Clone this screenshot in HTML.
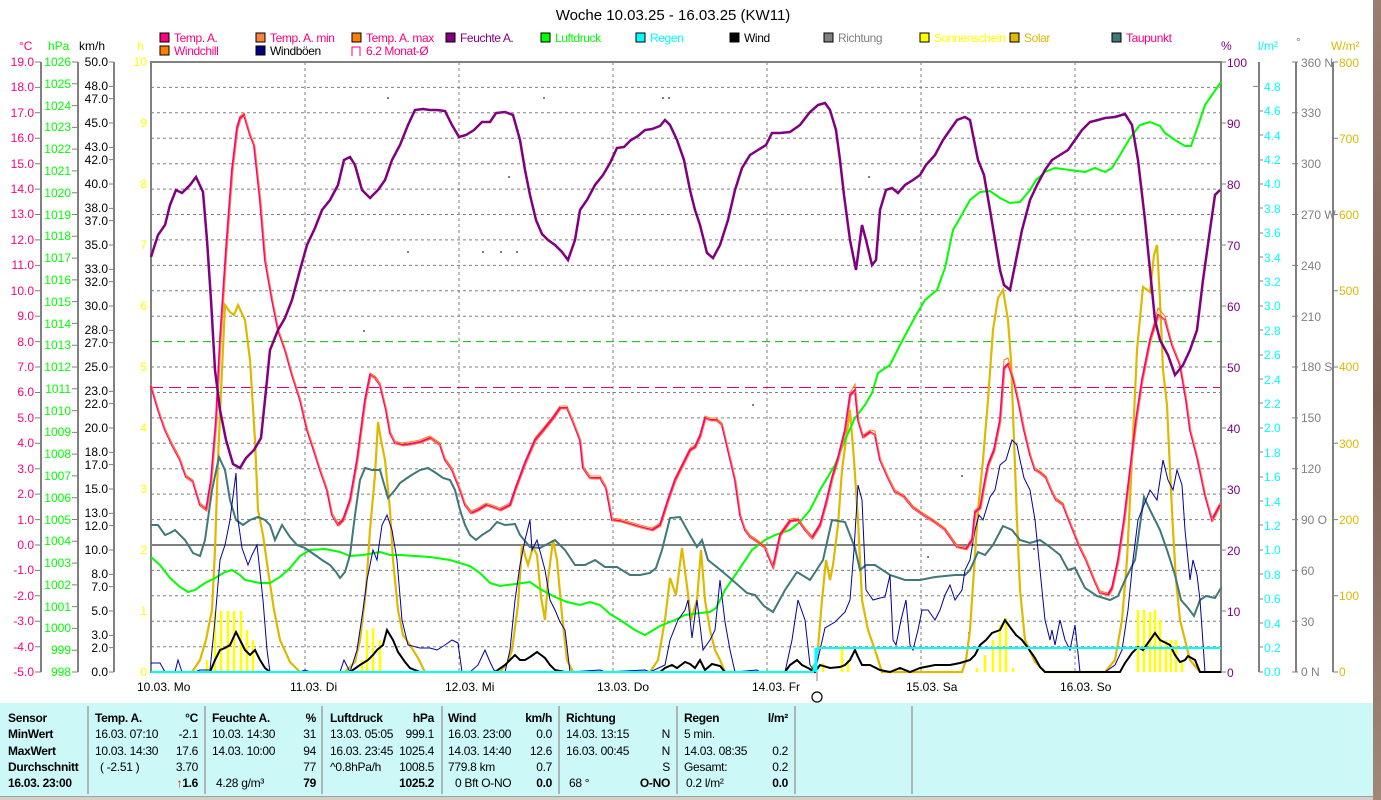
<!DOCTYPE html>
<html><head><meta charset="utf-8"><style>
html,body{margin:0;padding:0;background:#fff;width:1381px;height:800px;overflow:hidden}
svg{display:block;font-family:"Liberation Sans",Arial,sans-serif}
.t{font-size:12px}
.lg text{letter-spacing:-0.4px}
.tb text{letter-spacing:-0.3px}
</style></head><body>
<svg width="1381" height="800" viewBox="0 0 1381 800" xmlns="http://www.w3.org/2000/svg">
<rect x="0" y="0" width="1381" height="800" fill="#fff"/>
<defs><linearGradient id="ph" x1="0" y1="0" x2="0" y2="1"><stop offset="0" stop-color="#9a7e70"/><stop offset=".5" stop-color="#7a5e52"/><stop offset="1" stop-color="#a08878"/></linearGradient></defs>
<rect x="1373" y="0" width="8" height="800" fill="url(#ph)"/>

<text x="673" y="20" font-size="15" text-anchor="middle" fill="#000">Woche 10.03.25 - 16.03.25 (KW11)</text>

<g class="t lg" font-size="11">
<rect x="160" y="33" width="9" height="9" fill="#ff0080" stroke="#000"/><text x="174" y="42" fill="#ff0080">Temp. A.</text>
<rect x="256" y="33" width="9" height="9" fill="#ff8040" stroke="#000"/><text x="270" y="42" fill="#ff0080">Temp. A. min</text>
<rect x="352" y="33" width="9" height="9" fill="#ff8000" stroke="#000"/><text x="366" y="42" fill="#ff0080">Temp. A. max</text>
<rect x="446" y="33" width="9" height="9" fill="#800080" stroke="#000"/><text x="460" y="42" fill="#800080">Feuchte A.</text>
<rect x="541" y="33" width="9" height="9" fill="#00ff00" stroke="#000"/><text x="555" y="42" fill="#00ff00">Luftdruck</text>
<rect x="636" y="33" width="9" height="9" fill="#00ffff" stroke="#000"/><text x="650" y="42" fill="#00ffff">Regen</text>
<rect x="730" y="33" width="9" height="9" fill="#000" stroke="#000"/><text x="744" y="42" fill="#000">Wind</text>
<rect x="824" y="33" width="9" height="9" fill="#808080" stroke="#000"/><text x="838" y="42" fill="#808080">Richtung</text>
<rect x="920" y="33" width="9" height="9" fill="#ffff00" stroke="#000"/><text x="934" y="42" fill="#ffff00">Sonnenschein</text>
<rect x="1010" y="33" width="9" height="9" fill="#e0b800" stroke="#000"/><text x="1024" y="42" fill="#e0b800">Solar</text>
<rect x="1112" y="33" width="9" height="9" fill="#407878" stroke="#000"/><text x="1126" y="42" fill="#ff0080">Taupunkt</text>
<rect x="160" y="46" width="9" height="9" fill="#ff8000" stroke="#000"/><text x="174" y="55" fill="#ff0080">Windchill</text>
<rect x="256" y="46" width="9" height="9" fill="#000080" stroke="#000"/><text x="270" y="55" fill="#000">Windböen</text>
<path d="M352 56 V47 H360 V56" fill="none" stroke="#ff0080"/><text x="366" y="55" fill="#ff0080">6.2 Monat-Ø</text>
</g>

<g class="t" font-size="11">
<text x="19" y="50" fill="#ff0080">°C</text>
<text x="48" y="50" fill="#00ff00">hPa</text>
<text x="79" y="50" fill="#000">km/h</text>
<text x="137" y="50" fill="#ffff00">h</text>
<text x="1221" y="50" fill="#800080">%</text>
<text x="1258" y="50" fill="#00ffff">l/m²</text>
<text x="1296" y="46" fill="#808080">°</text>
<text x="1331" y="50" fill="#e0b800">W/m²</text>
</g>

<g stroke="#808080" stroke-width="1" stroke-dasharray="3,3">
<path d="M151 87.4H1221M151 112.8H1221M151 138.3H1221M151 163.7H1221M151 189.1H1221M151 214.5H1221M151 239.9H1221M151 265.4H1221M151 290.8H1221M151 316.2H1221M151 367H1221M151 392.5H1221M151 417.9H1221M151 443.3H1221M151 468.7H1221M151 494.1H1221M151 519.6H1221M151 570.4H1221M151 595.8H1221M151 621.2H1221M151 646.7H1221"/>
<path d="M305 62V672M459 62V672M613 62V672M767 62V672M921 62V672M1075 62V672"/>
</g>
<path d="M151 341.6H1221" stroke="#00c000" stroke-dasharray="8,5"/>
<path d="M151 387.5H1221" stroke="#e0007a" stroke-dasharray="12,6"/>
<path d="M151 545H1221" stroke="#808080" stroke-width="2"/>

<g stroke="#808080" stroke-width="2" fill="none">
<path d="M41 62V672M78 62V672M114 62V672"/>
<path d="M151 61V673M1221 61V673M150 62H1222"/>
<path d="M1259 62V672M1296 62V672M1333 62V672"/>
</g>
<g stroke="#808080" stroke-width="1">
<path d="M35 62h6M35 87.4h6M35 112.8h6M35 138.3h6M35 163.7h6M35 189.1h6M35 214.5h6M35 239.9h6M35 265.4h6M35 290.8h6M35 316.2h6M35 341.6h6M35 367h6M35 392.5h6M35 417.9h6M35 443.3h6M35 468.7h6M35 494.1h6M35 519.6h6M35 545h6M35 570.4h6M35 595.8h6M35 621.2h6M35 646.7h6M35 672h6"/>
<path d="M72 62h6M72 83.8h6M72 105.6h6M72 127.4h6M72 149.1h6M72 170.9h6M72 192.7h6M72 214.5h6M72 236.3h6M72 258.1h6M72 279.9h6M72 301.6h6M72 323.4h6M72 345.2h6M72 367h6M72 388.8h6M72 410.6h6M72 432.4h6M72 454.1h6M72 475.9h6M72 497.7h6M72 519.5h6M72 541.3h6M72 563.1h6M72 584.9h6M72 606.6h6M72 628.4h6M72 650.2h6M72 672h6"/>
<path d="M109 62h5M109 86.4h5M109 98.6h5M109 123h5M109 147.4h5M109 159.6h5M109 184h5M109 208.4h5M109 220.6h5M109 245h5M109 269.4h5M109 281.6h5M109 306h5M109 330.4h5M109 342.6h5M109 367h5M109 391.4h5M109 403.6h5M109 428h5M109 452.4h5M109 464.6h5M109 489h5M109 513.4h5M109 525.6h5M109 550h5M109 574.4h5M109 586.6h5M109 611h5M109 635.4h5M109 647.6h5M109 672h5"/>
<path d="M1221 62h5M1221 123h5M1221 184h5M1221 245h5M1221 306h5M1221 367h5M1221 428h5M1221 489h5M1221 550h5M1221 611h5M1221 672h5"/>
<path d="M1253 86.4h6M1259 111h4M1259 135h4M1259 160h4M1259 184h4M1259 208h4M1259 233h4M1259 257h4M1259 281h4M1259 306h4M1259 330h4M1259 355h4M1259 379h4M1259 403h4M1259 428h4M1259 452h4M1259 477h4M1259 501h4M1259 525h4M1259 550h4M1259 574h4M1259 599h4M1259 623h4M1259 647h4M1259 672h4"/>
<path d="M1292 62h6M1292 112.8h6M1292 163.7h6M1292 214.5h6M1292 265.4h6M1292 316.2h6M1292 367h6M1292 417.9h6M1292 468.7h6M1292 519.6h6M1292 570.4h6M1292 621.2h6M1292 672h6"/>
<path d="M1333 62h5M1333 138.3h5M1333 214.5h5M1333 290.8h5M1333 367h5M1333 443.3h5M1333 519.6h5M1333 595.8h5M1333 672h5"/>
<path d="M817 672v9"/>
</g>

<g class="t" font-size="12" text-anchor="end" fill="#ff0080">
<text x="34" y="66">19.0</text><text x="34" y="91">18.0</text><text x="34" y="117">17.0</text><text x="34" y="142">16.0</text><text x="34" y="168">15.0</text><text x="34" y="193">14.0</text><text x="34" y="218">13.0</text><text x="34" y="244">12.0</text><text x="34" y="269">11.0</text><text x="34" y="295">10.0</text><text x="34" y="320">9.0</text><text x="34" y="346">8.0</text><text x="34" y="371">7.0</text><text x="34" y="396">6.0</text><text x="34" y="422">5.0</text><text x="34" y="447">4.0</text><text x="34" y="473">3.0</text><text x="34" y="498">2.0</text><text x="34" y="524">1.0</text><text x="34" y="549">0.0</text><text x="34" y="574">-1.0</text><text x="34" y="600">-2.0</text><text x="34" y="625">-3.0</text><text x="34" y="651">-4.0</text><text x="34" y="676">-5.0</text>
</g>
<g class="t" font-size="12" text-anchor="end" fill="#00ff00">
<text x="71" y="66">1026</text><text x="71" y="88">1025</text><text x="71" y="110">1024</text><text x="71" y="131">1023</text><text x="71" y="153">1022</text><text x="71" y="175">1021</text><text x="71" y="197">1020</text><text x="71" y="219">1019</text><text x="71" y="240">1018</text><text x="71" y="262">1017</text><text x="71" y="284">1016</text><text x="71" y="306">1015</text><text x="71" y="328">1014</text><text x="71" y="349">1013</text><text x="71" y="371">1012</text><text x="71" y="393">1011</text><text x="71" y="415">1010</text><text x="71" y="436">1009</text><text x="71" y="458">1008</text><text x="71" y="480">1007</text><text x="71" y="502">1006</text><text x="71" y="524">1005</text><text x="71" y="545">1004</text><text x="71" y="567">1003</text><text x="71" y="589">1002</text><text x="71" y="611">1001</text><text x="71" y="632">1000</text><text x="71" y="654">999</text><text x="71" y="676">998</text>
</g>
<g class="t" font-size="12" text-anchor="end" fill="#000">
<text x="108" y="66">50.0</text><text x="108" y="90">48.0</text><text x="108" y="103">47.0</text><text x="108" y="127">45.0</text><text x="108" y="151">43.0</text><text x="108" y="164">42.0</text><text x="108" y="188">40.0</text><text x="108" y="212">38.0</text><text x="108" y="225">37.0</text><text x="108" y="249">35.0</text><text x="108" y="273">33.0</text><text x="108" y="286">32.0</text><text x="108" y="310">30.0</text><text x="108" y="334">28.0</text><text x="108" y="347">27.0</text><text x="108" y="371">25.0</text><text x="108" y="395">23.0</text><text x="108" y="408">22.0</text><text x="108" y="432">20.0</text><text x="108" y="456">18.0</text><text x="108" y="469">17.0</text><text x="108" y="493">15.0</text><text x="108" y="517">13.0</text><text x="108" y="530">12.0</text><text x="108" y="554">10.0</text><text x="108" y="578">8.0</text><text x="108" y="591">7.0</text><text x="108" y="615">5.0</text><text x="108" y="639">3.0</text><text x="108" y="652">2.0</text><text x="108" y="676">0.0</text>
</g>
<g class="t" font-size="12" text-anchor="end" fill="#ffff00">
<text x="147" y="66">10</text><text x="147" y="127">9</text><text x="147" y="188">8</text><text x="147" y="249">7</text><text x="147" y="310">6</text><text x="147" y="371">5</text><text x="147" y="432">4</text><text x="147" y="493">3</text><text x="147" y="554">2</text><text x="147" y="615">1</text><text x="147" y="676">0</text>
</g>
<g class="t" font-size="12" fill="#800080">
<text x="1227" y="67">100</text><text x="1227" y="128">90</text><text x="1227" y="189">80</text><text x="1227" y="250">70</text><text x="1227" y="311">60</text><text x="1227" y="372">50</text><text x="1227" y="433">40</text><text x="1227" y="494">30</text><text x="1227" y="555">20</text><text x="1227" y="616">10</text><text x="1227" y="677">0</text>
</g>
<g class="t" font-size="12" fill="#00ffff">
<text x="1264" y="91">4.8</text><text x="1264" y="115">4.6</text><text x="1264" y="140">4.4</text><text x="1264" y="164">4.2</text><text x="1264" y="188">4.0</text><text x="1264" y="213">3.8</text><text x="1264" y="237">3.6</text><text x="1264" y="262">3.4</text><text x="1264" y="286">3.2</text><text x="1264" y="310">3.0</text><text x="1264" y="335">2.8</text><text x="1264" y="359">2.6</text><text x="1264" y="384">2.4</text><text x="1264" y="408">2.2</text><text x="1264" y="432">2.0</text><text x="1264" y="457">1.8</text><text x="1264" y="481">1.6</text><text x="1264" y="506">1.4</text><text x="1264" y="530">1.2</text><text x="1264" y="554">1.0</text><text x="1264" y="579">0.8</text><text x="1264" y="603">0.6</text><text x="1264" y="628">0.4</text><text x="1264" y="652">0.2</text><text x="1264" y="676">0.0</text>
</g>
<g class="t" font-size="12" fill="#808080">
<text x="1301" y="67">360 N</text><text x="1301" y="117">330</text><text x="1301" y="168">300</text><text x="1301" y="219">270 W</text><text x="1301" y="270">240</text><text x="1301" y="321">210</text><text x="1301" y="371">180 S</text><text x="1301" y="422">150</text><text x="1301" y="473">120</text><text x="1301" y="524">90  O</text><text x="1301" y="575">60</text><text x="1301" y="626">30</text><text x="1301" y="676">0  N</text>
</g>
<g class="t" font-size="12" fill="#e0b800">
<text x="1339" y="67">800</text><text x="1339" y="143">700</text><text x="1339" y="219">600</text><text x="1339" y="295">500</text><text x="1339" y="371">400</text><text x="1339" y="448">300</text><text x="1339" y="524">200</text><text x="1339" y="600">100</text><text x="1339" y="676">0</text>
</g>

<g class="t" font-size="12" fill="#000">
<text x="137" y="691">10.03.  Mo</text><text x="290" y="691">11.03.  Di</text><text x="445" y="691">12.03.  Mi</text><text x="597" y="691">13.03.  Do</text><text x="752" y="691">14.03.  Fr</text><text x="906" y="691">15.03.  Sa</text><text x="1060" y="691">16.03.  So</text>
</g>
<circle cx="817" cy="697" r="5" fill="none" stroke="#000" stroke-width="1.2"/>

<g fill="#808080">
<rect x="387" y="97" width="2" height="2"/><rect x="543" y="97" width="2" height="2"/><rect x="662" y="97" width="2" height="2"/><rect x="668" y="97" width="2" height="2"/><rect x="407" y="251" width="2" height="2"/><rect x="482" y="251" width="2" height="2"/><rect x="500" y="251" width="2" height="2"/><rect x="516" y="251" width="2" height="2"/><rect x="363" y="330" width="2" height="2"/><rect x="752" y="404" width="2" height="2"/><rect x="868" y="176" width="2" height="2"/><rect x="508" y="176" width="2" height="2"/><rect x="961" y="475" width="2" height="2"/><rect x="927" y="556" width="2" height="2"/><rect x="1033" y="548" width="2" height="2"/><rect x="968" y="632" width="2" height="2"/>
</g>

<g stroke="#ffff00" stroke-width="2.5">
<path d="M215 672V611M221 672V611M228 672V611M234 672V611M241 672V611M247 672V630M253 672V640M207 672V660"/>
<path d="M367 672V630M373 672V628M380 672V640M362 672V660"/>
<path d="M823 672V663M842 672V645M848 672V660"/>
<path d="M977 672V668M985 672V655M993 672V640M1000 672V625M1006 672V618M1013 672V668"/>
<path d="M1138 672V610M1144 672V610M1150 672V612M1155 672V610M1160 672V620M1166 672V640M1171 672V640M1176 672V640M1182 672V660"/>
</g>

<polyline fill="none" stroke="#e0b800" stroke-width="2.2" points="151,672 192,672 200,660 206,640 212,610 215,550 218,460 222,370 225,305 230,312 234,315 238,305 245,320 250,360 255,440 258,510 263,535 268,570 274,610 280,640 290,662 300,672 345,672 355,662 360,640 366,590 370,530 375,475 378,422 381,440 385,460 390,510 393,560 398,610 403,635 410,645 418,658 425,672 500,672 508,662 512,650 518,605 522,545 528,565 533,547 537,555 541,597 545,620 548,580 553,540 557,560 562,615 567,660 573,672 650,672 658,660 665,620 670,578 676,595 682,548 688,594 691,620 697,600 701,550 705,600 710,630 715,650 720,660 725,672 810,672 817,660 822,600 826,560 830,580 833,565 838,525 842,470 846,440 850,410 854,460 858,520 862,600 868,630 875,650 882,672 962,672 966,660 970,630 974,570 978,510 983,460 988,400 993,330 998,298 1003,290 1008,320 1011,360 1014,440 1017,520 1020,590 1025,640 1035,662 1045,672 1105,672 1115,660 1122,620 1127,560 1131,480 1137,350 1143,287 1150,292 1154,255 1157,245 1160,300 1163,370 1167,405 1170,470 1173,530 1176,580 1180,620 1190,660 1200,672"/>

<polyline fill="none" stroke="#00ff00" stroke-width="2" points="151,557 160,565 170,578 180,587 188,592 195,590 205,583 215,578 225,572 232,570 240,575 245,580 260,583 270,583 280,577 290,568 300,556 310,550 325,549 340,552 350,556 363,555 380,552 390,555 400,555 430,557 450,560 470,566 480,573 490,583 500,586 515,584 530,582 540,589 555,597 567,602 580,605 590,602 600,605 610,614 620,620 635,630 645,635 660,626 675,620 685,615 700,613 710,612 716,608 725,590 740,568 752,550 765,540 775,535 790,530 800,522 810,510 820,490 835,465 845,440 855,418 865,405 872,393 878,373 890,365 900,345 915,317 925,300 937,290 945,268 953,230 960,218 970,200 980,192 990,191 1000,198 1010,203 1020,202 1030,190 1036,180 1045,172 1055,168 1070,170 1085,172 1095,168 1105,172 1112,168 1120,155 1130,138 1140,125 1150,122 1160,126 1165,133 1175,140 1185,146 1191,146 1200,120 1205,105 1212,95 1221,82"/>

<polyline fill="none" stroke="#407878" stroke-width="2" points="151,525 158,525 165,535 170,533 175,530 185,540 193,553 200,556 205,540 212,490 219,457 225,470 230,500 236,520 243,525 250,520 258,517 265,520 270,525 275,540 282,525 290,537 297,545 305,548 315,555 322,560 330,565 336,572 340,578 345,572 350,555 355,515 360,480 365,468 372,470 380,470 388,498 395,490 400,483 410,476 420,470 428,468 436,473 443,478 450,480 455,490 460,510 465,525 470,535 476,540 482,535 490,530 497,522 505,525 515,524 520,535 530,547 540,548 555,540 565,550 575,565 585,565 595,560 605,567 617,567 630,575 640,575 650,573 656,568 662,550 670,518 680,517 690,535 697,547 702,540 708,560 718,568 730,578 747,593 755,595 764,606 773,612 785,590 797,572 810,580 823,560 832,520 845,522 855,548 860,570 866,565 875,565 890,575 905,580 920,580 935,577 955,575 965,575 970,570 978,552 985,555 993,545 1003,526 1012,530 1020,540 1030,543 1040,540 1050,547 1060,555 1068,570 1075,568 1085,588 1097,596 1110,600 1118,596 1125,580 1135,560 1140,525 1144,497 1150,510 1160,530 1167,550 1175,575 1181,600 1188,608 1194,616 1200,600 1206,596 1215,598 1221,588"/>

<polyline fill="none" stroke="#0000a0" stroke-width="1" points="151,663 160,663 165,672 175,672 178,660 182,672 195,672 200,670 210,670 215,620 220,560 225,545 230,520 236,473 238,520 242,548 248,565 252,555 257,545 263,600 267,650 270,672 300,672 305,670 310,672 340,672 344,660 350,672 357,650 363,610 367,580 373,550 377,560 382,525 387,515 392,530 397,560 402,620 408,645 420,648 430,648 437,650 445,645 452,640 458,643 462,672 470,672 478,665 485,650 490,662 495,672 505,672 510,650 515,600 520,565 525,540 530,520 532,550 537,540 545,570 550,600 555,610 560,622 565,630 570,672 600,670 605,672 645,670 650,672 665,665 670,640 678,620 685,610 688,600 692,638 697,600 703,650 710,640 715,630 720,580 725,622 730,650 735,672 757,670 760,672 785,672 792,640 798,600 805,620 810,665 815,672 820,650 825,628 835,622 845,612 850,600 854,550 858,485 862,500 866,590 873,600 880,598 885,597 890,575 893,640 896,645 901,620 906,600 910,645 913,650 918,630 922,610 928,610 935,620 940,610 945,595 950,585 955,600 962,590 965,570 970,560 975,530 979,515 983,520 990,497 995,490 1000,465 1006,460 1012,440 1017,445 1020,460 1024,478 1030,490 1035,520 1040,570 1045,620 1050,640 1052,630 1055,645 1060,620 1065,640 1070,650 1075,625 1080,672 1105,672 1115,665 1122,650 1128,610 1133,560 1138,520 1144,505 1150,490 1157,500 1163,460 1168,480 1173,490 1177,470 1182,485 1185,530 1190,580 1193,560 1197,575 1200,600 1205,672 1221,672"/>

<polyline fill="none" stroke="#000" stroke-width="2" points="151,672 210,672 215,660 220,650 225,648 230,645 236,632 240,640 245,650 250,655 255,650 260,660 265,668 270,672 350,672 360,665 368,660 373,655 377,650 383,645 387,630 393,640 398,652 405,662 410,668 420,672 495,672 505,665 515,655 520,660 525,660 530,657 537,652 545,658 550,665 555,670 565,672 660,672 665,668 672,665 677,668 685,662 690,664 695,668 700,660 705,670 712,664 720,666 725,672 785,672 790,665 797,660 802,665 808,668 815,672 820,665 830,668 840,667 845,665 850,660 855,650 858,657 862,665 870,665 880,670 890,672 900,668 910,672 920,668 935,665 950,665 960,663 970,660 975,655 980,645 986,640 992,633 1000,630 1005,620 1010,627 1016,635 1022,640 1028,648 1035,658 1040,667 1045,672 1120,672 1125,663 1132,653 1138,647 1143,650 1150,640 1155,633 1160,640 1170,645 1175,655 1180,662 1185,660 1188,656 1195,660 1200,672 1221,672"/>

<polyline fill="none" stroke="#00ffff" stroke-width="2" points="151,672 813,672 816,660 818,648 1221,648"/>
<path d="M816 672V648" stroke="#00ffff" stroke-width="3"/>

<polyline fill="none" stroke="#ff8000" stroke-width="1" transform="translate(0,-2)" points="151,386 158,410 165,430 172,445 180,460 186,477 193,482 200,505 206,510 211,480 216,420 220,340 226,250 232,170 237,128 240,118 244,115 250,135 254,145 260,200 265,260 272,300 278,330 285,350 292,375 300,400 307,430 313,448 320,470 327,490 332,515 338,525 343,520 350,500 357,460 365,400 370,375 375,378 380,385 386,410 390,433 395,443 402,445 410,444 420,442 430,438 440,445 445,460 452,470 460,490 465,505 471,513 478,510 486,505 492,507 500,510 510,505 515,490 525,463 535,440 545,428 553,418 560,408 567,408 573,422 580,440 583,468 590,478 600,478 606,488 612,520 620,521 630,524 640,527 652,530 660,525 668,500 675,480 685,460 690,450 695,447 700,436 705,418 710,420 716,420 722,425 727,446 735,480 740,515 745,530 750,537 756,541 765,548 773,567 780,535 790,521 798,520 805,530 812,538 820,525 826,503 832,478 838,458 845,430 850,395 855,386 858,420 863,437 870,432 875,433 880,460 888,478 895,492 904,497 913,508 923,515 934,522 945,530 950,537 957,547 966,549 972,540 975,512 980,508 985,480 988,465 994,450 1000,420 1004,362 1008,360 1013,378 1018,400 1024,430 1030,455 1035,470 1040,473 1046,478 1052,492 1056,500 1063,505 1068,518 1076,538 1080,548 1086,560 1095,582 1100,593 1108,595 1112,588 1118,560 1124,520 1130,470 1136,420 1142,380 1150,340 1158,310 1165,318 1172,345 1180,365 1186,400 1190,430 1197,457 1205,495 1212,520 1220,505"/>
<polyline fill="none" stroke="#ff0080" stroke-width="2" points="151,386 158,410 165,430 172,445 180,460 186,477 193,482 200,505 206,510 211,480 216,420 220,340 226,250 232,170 237,128 240,118 244,115 250,135 254,145 260,200 265,260 272,300 278,330 285,350 292,375 300,400 307,430 313,448 320,470 327,490 332,515 338,525 343,520 350,500 357,460 365,400 370,375 375,378 380,385 386,410 390,433 395,443 402,445 410,444 420,442 430,438 440,445 445,460 452,470 460,490 465,505 471,513 478,510 486,505 492,507 500,510 510,505 515,490 525,463 535,440 545,428 553,418 560,408 567,408 573,422 580,440 583,468 590,478 600,478 606,488 612,520 620,521 630,524 640,527 652,530 660,525 668,500 675,480 685,460 690,450 695,447 700,436 705,418 710,420 716,420 722,425 727,446 735,480 740,515 745,530 750,537 756,541 765,548 773,567 780,535 790,521 798,520 805,530 812,538 820,525 826,503 832,478 838,458 845,430 850,395 855,390 858,420 863,437 870,432 875,435 880,460 888,478 895,492 904,497 913,508 923,515 934,522 945,530 950,537 957,547 966,549 972,540 975,512 980,508 985,480 988,465 994,450 1000,420 1004,368 1008,364 1013,378 1018,400 1024,430 1030,455 1035,470 1040,473 1046,478 1052,492 1056,500 1063,505 1068,518 1076,538 1080,548 1086,560 1095,582 1100,593 1108,595 1112,588 1118,560 1124,520 1130,470 1136,420 1142,380 1150,340 1158,315 1165,320 1172,345 1180,365 1186,400 1190,430 1197,457 1205,495 1212,520 1220,505"/>
<polyline fill="none" stroke="#ff8040" stroke-width="1" transform="translate(1,1)" points="151,386 158,410 165,430 172,445 180,460 186,477 193,482 200,505 206,510 211,480 216,420 220,340 226,250 232,170 237,128 240,118 244,115 250,135 254,145 260,200 265,260 272,300 278,330 285,350 292,375 300,400 307,430 313,448 320,470 327,490 332,515 338,525 343,520 350,500 357,460 365,400 370,375 375,378 380,385 386,410 390,433 395,443 402,445 410,444 420,442 430,438 440,445 445,460 452,470 460,490 465,505 471,513 478,510 486,505 492,507 500,510 510,505 515,490 525,463 535,440 545,428 553,418 560,408 567,408 573,422 580,440 583,468 590,478 600,478 606,488 612,520 620,521 630,524 640,527 652,530 660,525 668,500 675,480 685,460 690,450 695,447 700,436 705,418 710,420 716,420 722,425 727,446 735,480 740,515 745,530 750,537 756,541 765,548 773,567 780,535 790,521 798,520 805,530 812,538 820,525 826,503 832,478 838,458 845,430 850,395 855,390 858,420 863,437 870,432 875,435 880,460 888,478 895,492 904,497 913,508 923,515 934,522 945,530 950,537 957,547 966,549 972,540 975,512 980,508 985,480 988,465 994,450 1000,420 1004,368 1008,364 1013,378 1018,400 1024,430 1030,455 1035,470 1040,473 1046,478 1052,492 1056,500 1063,505 1068,518 1076,538 1080,548 1086,560 1095,582 1100,593 1108,595 1112,588 1118,560 1124,520 1130,470 1136,420 1142,380 1150,340 1158,315 1165,320 1172,345 1180,365 1186,400 1190,430 1197,457 1205,495 1212,520 1220,505"/>

<polyline fill="none" stroke="#800080" stroke-width="2.5" points="151,257 158,235 165,225 170,205 176,190 182,193 190,185 196,177 203,192 207,240 211,300 215,370 220,410 226,440 233,464 240,468 246,458 254,450 261,438 266,390 270,350 278,330 285,318 292,300 300,270 307,245 315,228 322,210 330,200 338,185 344,160 350,157 355,165 362,190 370,198 378,190 385,180 392,160 400,145 408,125 415,110 423,109 430,110 437,110 445,111 452,125 459,137 466,135 474,130 482,122 490,122 496,113 505,112 513,115 520,140 525,170 530,195 536,220 542,234 548,240 555,245 562,252 568,260 575,240 580,210 587,200 595,185 603,175 610,163 617,148 624,147 631,140 638,136 645,130 652,129 660,126 665,120 670,125 677,140 684,160 690,190 695,210 700,225 707,253 713,258 720,245 728,220 735,190 742,168 750,155 758,150 766,145 772,133 780,133 790,132 800,125 810,112 818,105 825,103 830,110 836,130 840,160 844,195 850,240 856,270 862,225 866,240 872,265 876,260 880,210 886,190 892,188 898,193 905,185 913,180 920,175 926,165 935,155 943,140 950,130 957,120 965,117 970,120 978,160 984,175 990,210 995,240 1000,270 1004,285 1010,290 1015,265 1022,230 1030,200 1037,185 1045,170 1052,160 1060,155 1068,150 1075,140 1082,130 1090,122 1098,120 1105,118 1115,117 1125,114 1132,125 1138,160 1145,220 1150,270 1155,320 1160,340 1168,355 1175,375 1183,365 1190,350 1197,330 1203,280 1210,230 1215,195 1220,190"/>

<rect x="0" y="703" width="1373" height="93" fill="#ccf8f8"/>
<rect x="0" y="796" width="1373" height="4" fill="#d4d0c8"/>
<path d="M0 796.5H1373" stroke="#a0a0a0"/>
<g stroke="#a0a0a0" stroke-width="1.5">
<path d="M88 706V794M205 706V794M322 706V794M442 706V794M559 706V794M677 706V794M795 706V794M912 706V794"/>
</g>
<g class="t tb" font-size="11.5" fill="#000">
<g font-weight="bold"><text x="8" y="722">Sensor</text><text x="8" y="738">MinWert</text><text x="8" y="755">MaxWert</text><text x="8" y="771">Durchschnitt</text><text x="8" y="787">16.03. 23:00</text></g>

<text x="95" y="722" font-weight="bold">Temp. A.</text><text x="198" y="722" font-weight="bold" text-anchor="end">°C</text>
<text x="95" y="738">16.03.  07:10</text><text x="198" y="738" text-anchor="end">-2.1</text>
<text x="95" y="755">10.03.  14:30</text><text x="198" y="755" text-anchor="end">17.6</text>
<text x="100" y="771">( -2.51 )</text><text x="198" y="771" text-anchor="end">3.70</text>
<text x="198" y="787" text-anchor="end" font-weight="bold"><tspan fill="#ff0000">↑</tspan>1.6</text>

<text x="212" y="722" font-weight="bold">Feuchte A.</text><text x="316" y="722" font-weight="bold" text-anchor="end">%</text>
<text x="212" y="738">10.03.  14:30</text><text x="316" y="738" text-anchor="end">31</text>
<text x="212" y="755">14.03.  10:00</text><text x="316" y="755" text-anchor="end">94</text>
<text x="316" y="771" text-anchor="end">77</text>
<text x="216" y="787">4.28 g/m³</text><text x="316" y="787" text-anchor="end" font-weight="bold">79</text>

<text x="330" y="722" font-weight="bold">Luftdruck</text><text x="434" y="722" font-weight="bold" text-anchor="end">hPa</text>
<text x="330" y="738">13.03.  05:05</text><text x="434" y="738" text-anchor="end">999.1</text>
<text x="330" y="755">16.03.  23:45</text><text x="434" y="755" text-anchor="end">1025.4</text>
<text x="330" y="771">^0.8hPa/h</text><text x="434" y="771" text-anchor="end">1008.5</text>
<text x="434" y="787" text-anchor="end" font-weight="bold">1025.2</text>

<text x="448" y="722" font-weight="bold">Wind</text><text x="552" y="722" font-weight="bold" text-anchor="end">km/h</text>
<text x="448" y="738">16.03.  23:00</text><text x="552" y="738" text-anchor="end">0.0</text>
<text x="448" y="755">14.03.  14:40</text><text x="552" y="755" text-anchor="end">12.6</text>
<text x="448" y="771">779.8 km</text><text x="552" y="771" text-anchor="end">0.7</text>
<text x="455" y="787">0 Bft O-NO</text><text x="552" y="787" text-anchor="end" font-weight="bold">0.0</text>

<text x="566" y="722" font-weight="bold">Richtung</text>
<text x="566" y="738">14.03.  13:15</text><text x="670" y="738" text-anchor="end">N</text>
<text x="566" y="755">16.03.  00:45</text><text x="670" y="755" text-anchor="end">N</text>
<text x="670" y="771" text-anchor="end">S</text>
<text x="569" y="787">68 °</text><text x="670" y="787" text-anchor="end" font-weight="bold">O-NO</text>

<text x="684" y="722" font-weight="bold">Regen</text><text x="788" y="722" font-weight="bold" text-anchor="end">l/m²</text>
<text x="684" y="738">5 min.</text>
<text x="684" y="755">14.03.  08:35</text><text x="788" y="755" text-anchor="end">0.2</text>
<text x="684" y="771">Gesamt:</text><text x="788" y="771" text-anchor="end">0.2</text>
<text x="686" y="787">0.2 l/m²</text><text x="788" y="787" text-anchor="end" font-weight="bold">0.0</text>
</g>
</svg>
</body></html>
